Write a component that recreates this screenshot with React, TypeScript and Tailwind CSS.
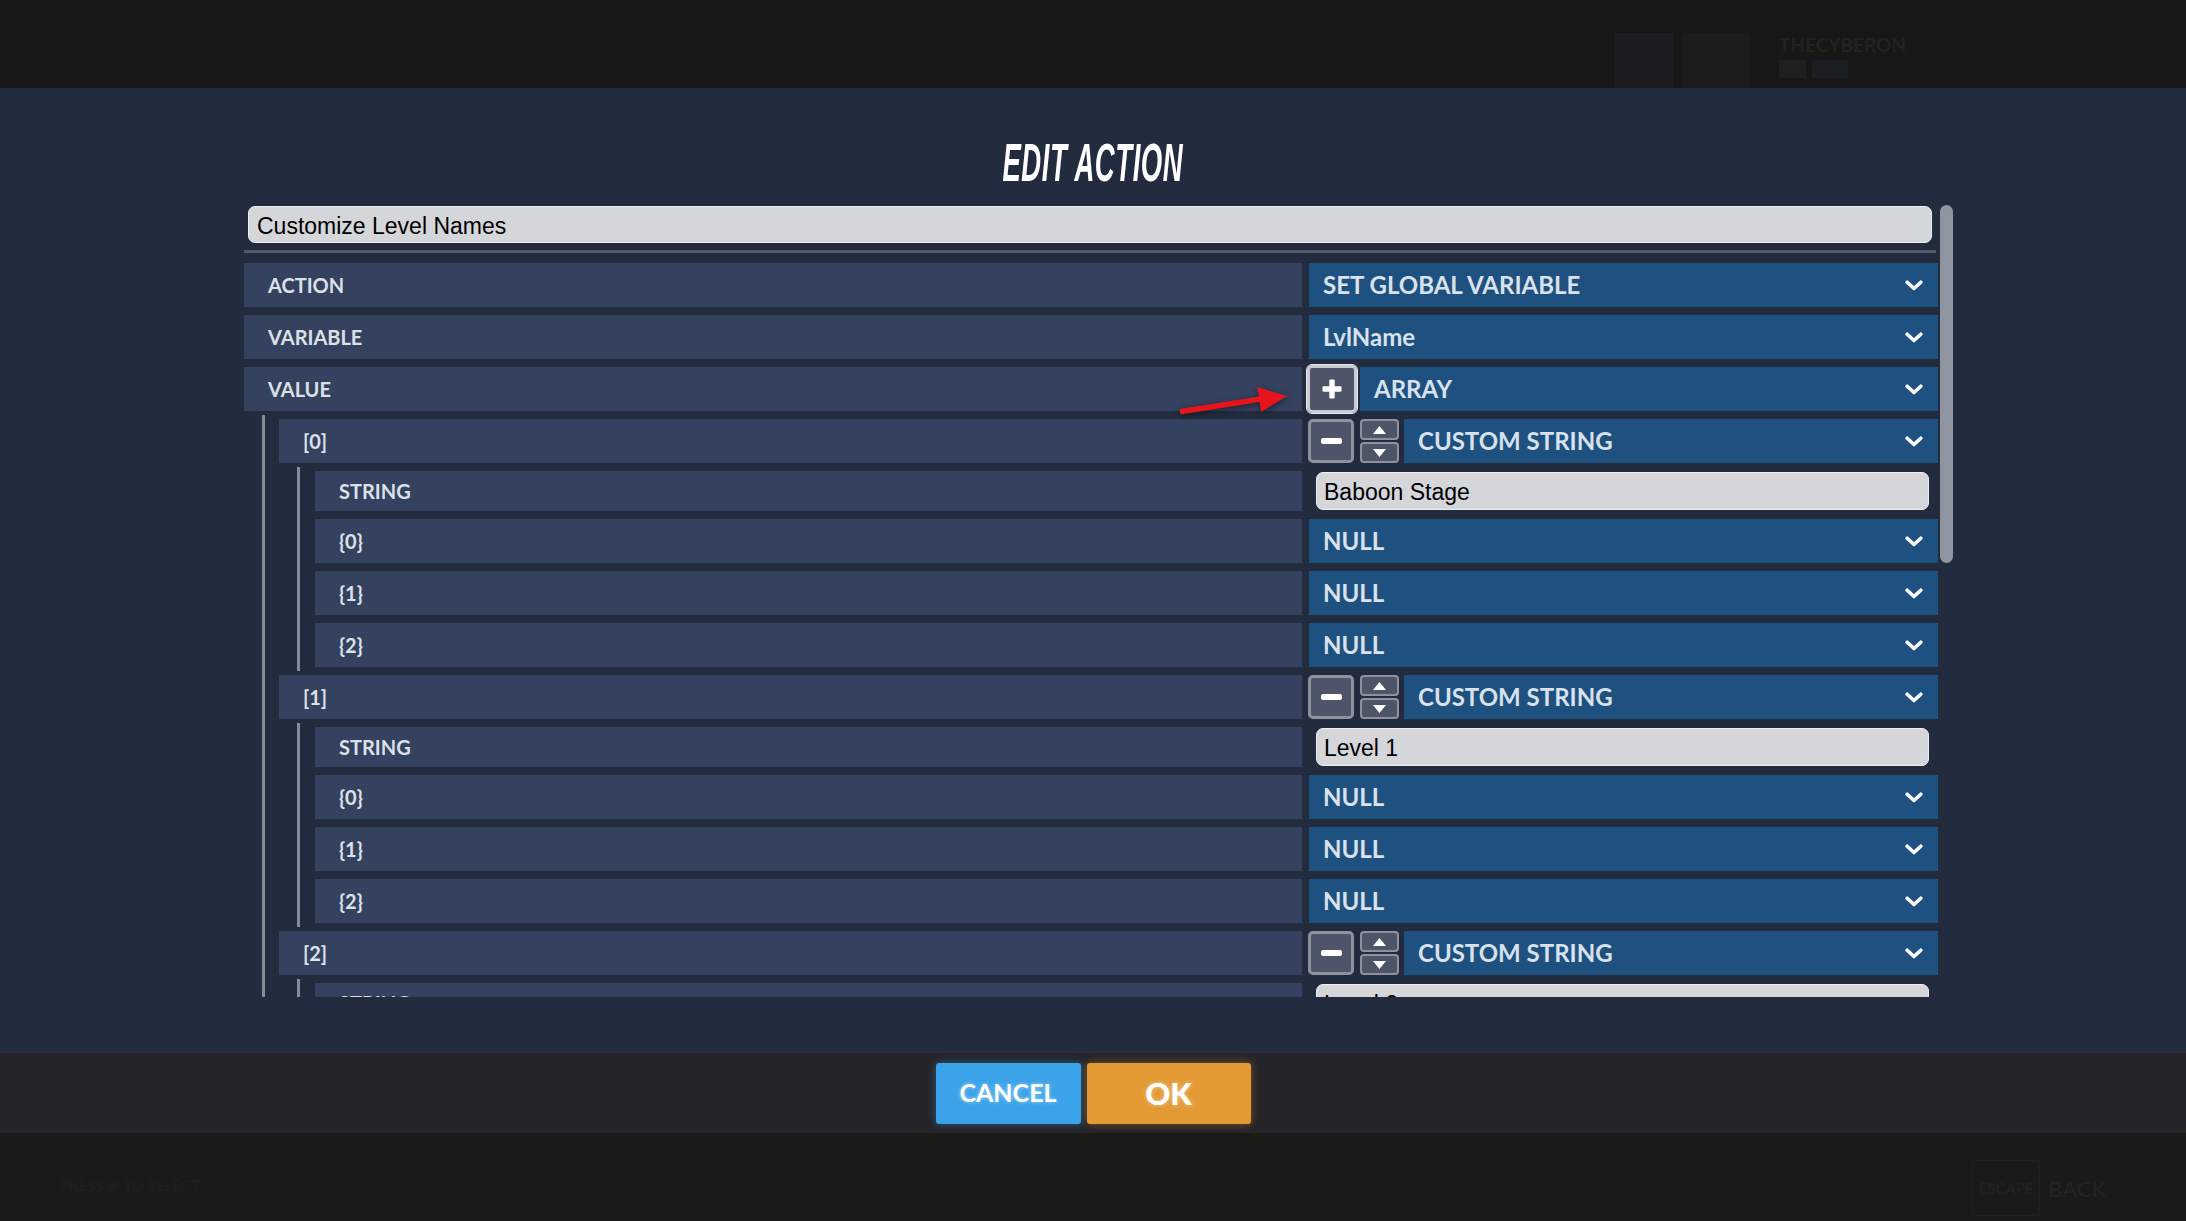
import React from "react";

const sans = "font-['Lato',sans-serif]";

function Chevron() {
  return (
    <svg width="18" height="11" viewBox="0 0 18 11">
      <path d="M2.2 2.2l6.8 6.3 6.8-6.3" fill="none" stroke="#ffffff" strokeWidth="3.6" strokeLinecap="round" strokeLinejoin="round" />
    </svg>
  );
}

function Dropdown({ text, className = "" }: { text: string; className?: string }) {
  return (
    <div className={`flex-1 h-[44px] bg-[#1f5180] flex items-center justify-between pl-[14px] pr-[15px] ${className}`}>
      <span className={`${sans} font-bold text-[24px] text-[#d9e1eb] leading-none`}>{text}</span>
      <Chevron />
    </div>
  );
}

function TextBox({ value }: { value: string }) {
  return (
    <div className="flex-1 ml-[7px] mr-[9px] h-[38px] bg-[#d5d6da] border border-[#eceef1] rounded-[7px] flex items-center pl-[7px] pt-[3px] font-['Liberation_Sans',Arial,sans-serif] text-[23px] text-black">
      {value}
    </div>
  );
}

function MinusUpDown({ text }: { text: string }) {
  return (
    <>
      <div className="-ml-[1px] w-[46px] h-[44px] bg-[#4f5568] border-[3px] border-[#8d929d] rounded-[5px] flex items-center justify-center">
        <div className="w-[21px] h-[6px] rounded-[2px] bg-white" />
      </div>
      <div className="ml-[6px] w-[39px] h-[44px] flex flex-col gap-[2px]">
        <div className="flex-1 bg-[#4f5568] border-2 border-[#8d929d] rounded-[4px] flex items-center justify-center">
          <svg width="13" height="8" viewBox="0 0 13 8"><path d="M6.5 0L13 8H0z" fill="#ffffff" /></svg>
        </div>
        <div className="flex-1 bg-[#4f5568] border-2 border-[#8d929d] rounded-[4px] flex items-center justify-center">
          <svg width="13" height="8" viewBox="0 0 13 8"><path d="M0 0h13L6.5 8z" fill="#ffffff" /></svg>
        </div>
      </div>
      <Dropdown text={text} className="ml-[5px]" />
    </>
  );
}

function PlusArray() {
  return (
    <>
      <div className="-ml-[2px] -my-[2px] w-[50px] h-[48px] bg-[#4f5568] border-[3px] border-[#c9ccd3] rounded-[5px] outline outline-1 outline-[#e6e8ec] flex items-center justify-center">
        <svg width="20" height="20" viewBox="0 0 20 20">
          <rect x="7.3" y="0.5" width="5.4" height="19" rx="1" fill="#ffffff" />
          <rect x="0.5" y="7.3" width="19" height="5.4" rx="1" fill="#ffffff" />
        </svg>
      </div>
      <Dropdown text="ARRAY" className="ml-[3px]" />
    </>
  );
}

function Row({ label, short = false, children }: { label: string; short?: boolean; children: React.ReactNode }) {
  return (
    <div className={`flex shrink-0 ${short ? "h-[40px]" : "h-[44px]"}`}>
      <div className={`flex-1 bg-[#34425f] flex items-center pl-[24px] ${sans} font-bold text-[20px] text-[#dce1e8]`}>{label}</div>
      <div className="w-[629px] ml-[7px] flex items-center">{children}</div>
    </div>
  );
}

function Element({ index, text }: { index: number; text: string }) {
  return (
    <>
      <Row label={`[${index}]`}>
        <MinusUpDown text="CUSTOM STRING" />
      </Row>
      <div className="flex flex-col gap-2 -my-1 py-1 ml-[18px] pl-[15px] border-l-[3px] border-[#868b96]">
        <Row label="STRING" short>
          <TextBox value={text} />
        </Row>
        <Row label="{0}"><Dropdown text="NULL" /></Row>
        <Row label="{1}"><Dropdown text="NULL" /></Row>
        <Row label="{2}"><Dropdown text="NULL" /></Row>
      </div>
    </>
  );
}

export default function App() {
  return (
    <div className="relative w-[2186px] h-[1221px] flex flex-col overflow-hidden bg-[#1a1a1a]">
      {/* top bar (dimmed game menu behind the dialog) */}
      <div className="h-[88px] shrink-0 bg-[#171717] flex justify-end items-end pr-[280px]">
        <div className="flex items-end gap-[10px]">
          <div className="w-[58px] h-[55px] bg-[#1b1d21]" />
          <div className="w-[66px] h-[55px] bg-[#1d1c1c]" />
          <div className="ml-[20px] pb-[10px] flex flex-col gap-[6px]">
            <span className={`${sans} font-bold text-[19px] leading-none text-[#222222]`}>THECYBERON</span>
            <div className="flex gap-[6px]">
              <div className="w-[27px] h-[18px] bg-[#1e2020]" />
              <div className="w-[36px] h-[18px] bg-[#1b1f24]" />
            </div>
          </div>
        </div>
      </div>

      {/* dialog */}
      <div className="flex-1 bg-[#232c3f] flex flex-col">
        <div className="pt-[48px] h-[101px] flex justify-center">
          <h1 className="inline-block scale-x-[0.52] italic font-bold font-['Liberation_Sans',Arial,sans-serif] text-[53px] leading-none text-white tracking-[1px]">
            EDIT ACTION
          </h1>
        </div>

        <div className="mt-[17px] ml-[244px] flex">
          <div className="w-[1694px] flex flex-col">
            <div className="ml-[4px] mr-[6px] h-[37px] bg-[#d5d6da] border border-[#eceef1] rounded-[7px] flex items-center pl-[8px] pt-[3px] font-['Liberation_Sans',Arial,sans-serif] text-[23px] text-black">
              Customize Level Names
            </div>
            <div className="mt-[7px] mr-[2px] h-[3px] bg-[#525a6a]" />
            <div className="mt-[10px] h-[734px] overflow-hidden flex flex-col gap-2">
              <Row label="ACTION"><Dropdown text="SET GLOBAL VARIABLE" /></Row>
              <Row label="VARIABLE"><Dropdown text="LvlName" /></Row>
              <Row label="VALUE"><PlusArray /></Row>
              <div className="flex flex-col gap-2 -my-1 py-1 ml-[18px] pl-[14px] border-l-[3px] border-[#868b96]">
                <Element index={0} text="Baboon Stage" />
                <Element index={1} text="Level 1" />
                <Element index={2} text="Level 2" />
              </div>
            </div>
          </div>
          <div className="ml-[2px] w-[13px] h-[358px] -mt-[1px] rounded-full bg-[#8e95a1]" />
        </div>
      </div>

      {/* button bar */}
      <div className="h-[80px] shrink-0 bg-[#252429] flex items-center justify-center gap-[6px]">
        <button className={`w-[145px] h-[61px] rounded-[3px] bg-[#3aa3e9] shadow-[0_0_8px_rgba(58,163,233,0.45)] ${sans} font-bold text-[25px] text-white [text-shadow:0_0_4px_rgba(255,255,255,0.5)]`}>
          CANCEL
        </button>
        <button className={`w-[164px] h-[61px] rounded-[3px] bg-[#e39a34] shadow-[0_0_8px_rgba(227,154,52,0.45)] ${sans} font-black text-[31px] text-white [text-shadow:0_0_4px_rgba(255,255,255,0.5)]`}>
          OK
        </button>
      </div>

      {/* footer (dimmed) */}
      <div className="h-[88px] shrink-0 bg-[#1a1a19] flex items-start justify-between px-[60px] pt-[45px]">
        <span className={`${sans} text-[15px] leading-none text-[#1f1f1f]`}>PRESS ◉ TO SELECT</span>
        <div className="flex items-center gap-[8px] pr-[20px]">
          <div className="w-[68px] h-[56px] -mt-[18px] border border-[#202020] rounded-[3px] flex items-center justify-center">
            <span className={`${sans} text-[15px] text-[#222222]`}>ESCAPE</span>
          </div>
          <span className={`${sans} text-[22px] -mt-[18px] text-[#232323]`}>BACK</span>
        </div>
      </div>

      {/* red annotation arrow */}
      <svg className="absolute left-[1170px] top-[375px] pointer-events-none drop-shadow-[0_2px_3px_rgba(0,0,0,0.5)]" width="125" height="50" viewBox="0 0 125 50">
        <polygon points="9.5,34 89,21.5 87,12 117,21 91,37 89.5,27 10.5,39.5" fill="#e8141c" />
      </svg>
    </div>
  );
}
